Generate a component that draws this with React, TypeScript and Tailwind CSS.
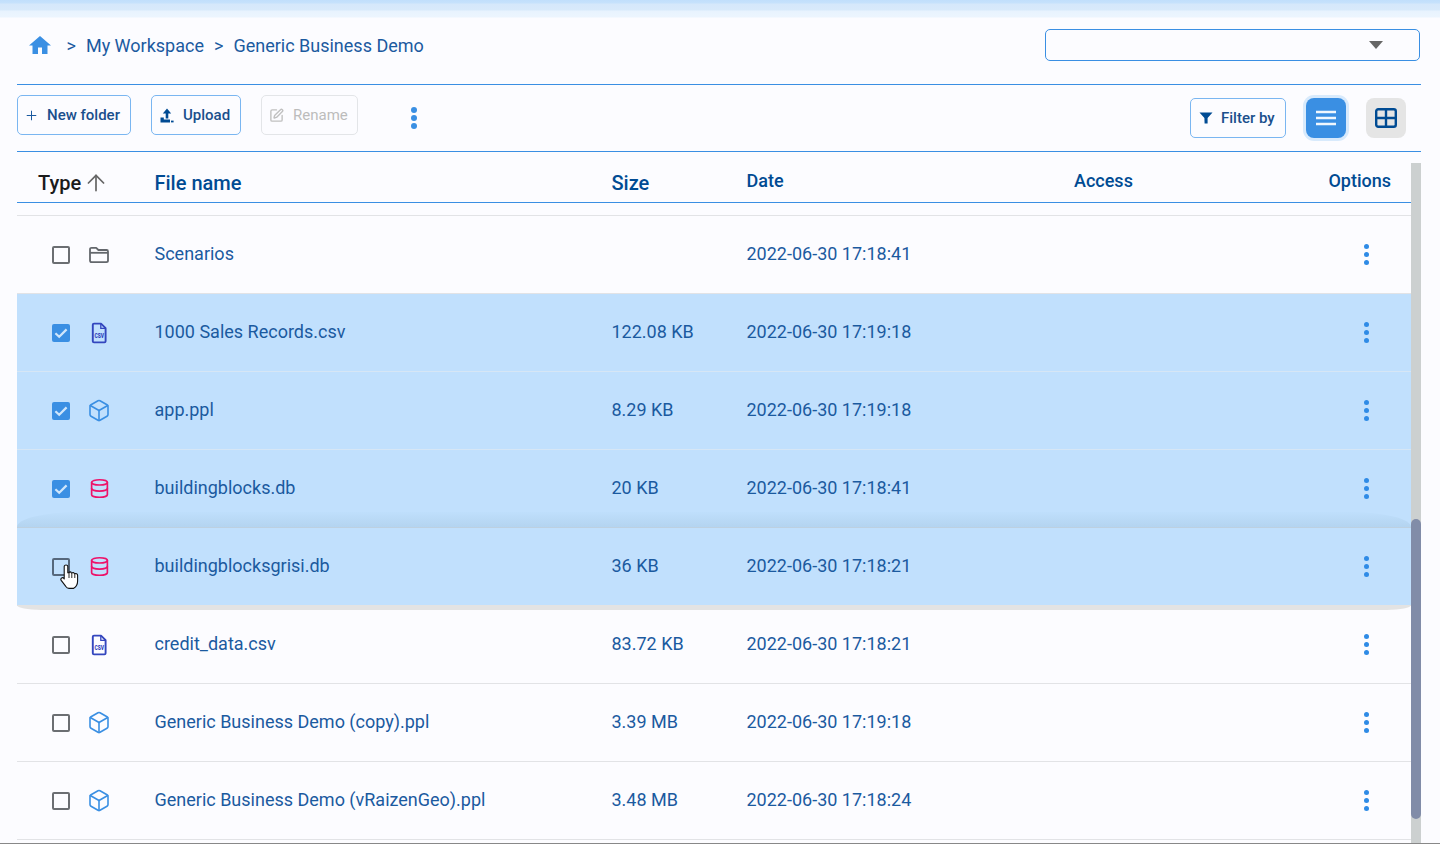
import React from "react";
import { ArrowUp, Box, Database, Plus, SquarePen } from "lucide-react";

type Kind = "folder" | "csv" | "ppl" | "db";
type Row = { name: string; size: string; date: string; kind: Kind; checked?: boolean; selected?: boolean; hover?: boolean };

const rows: Row[] = [
  { name: "Scenarios", size: "", date: "2022-06-30 17:18:41", kind: "folder" },
  { name: "1000 Sales Records.csv", size: "122.08 KB", date: "2022-06-30 17:19:18", kind: "csv", checked: true, selected: true },
  { name: "app.ppl", size: "8.29 KB", date: "2022-06-30 17:19:18", kind: "ppl", checked: true, selected: true },
  { name: "buildingblocks.db", size: "20 KB", date: "2022-06-30 17:18:41", kind: "db", checked: true, selected: true },
  { name: "buildingblocksgrisi.db", size: "36 KB", date: "2022-06-30 17:18:21", kind: "db", selected: true, hover: true },
  { name: "credit_data.csv", size: "83.72 KB", date: "2022-06-30 17:18:21", kind: "csv" },
  { name: "Generic Business Demo (copy).ppl", size: "3.39 MB", date: "2022-06-30 17:19:18", kind: "ppl" },
  { name: "Generic Business Demo (vRaizenGeo).ppl", size: "3.48 MB", date: "2022-06-30 17:18:24", kind: "ppl" },
];

function FileIcon({ kind }: { kind: Kind }) {
  if (kind === "folder")
    return (
      <svg width="22" height="22" viewBox="0 0 22 22" fill="none" stroke="#63676c" strokeWidth="1.8" strokeLinejoin="round">
        <path d="M2 7V5.5C2 4.4 2.7 3.8 3.6 3.8H8.2L10.4 6H18.6C19.5 6 20 6.7 20 7.5V16.6C20 17.6 19.4 18.2 18.4 18.2H3.6C2.6 18.2 2 17.6 2 16.6V7Z" />
        <path d="M2 8.8H20" />
      </svg>
    );
  if (kind === "csv")
    return (
      <svg width="22" height="22" viewBox="0 0 22 22" fill="none">
        <path d="M4.8 2.8C4.8 2 5.4 1.6 6 1.6H13L17.6 6.2V19.2C17.6 19.9 17 20.4 16.4 20.4H6C5.4 20.4 4.8 19.9 4.8 19.2V2.8Z" stroke="#3346be" strokeWidth="1.9" strokeLinejoin="round" />
        <path d="M12.8 2V6.4H17.2" stroke="#3346be" strokeWidth="1.3" />
        <text x="11.2" y="15.6" textAnchor="middle" fontSize="7" fontWeight="900" fill="#3346be" fontFamily="Roboto, sans-serif" textLength="9.6" lengthAdjust="spacingAndGlyphs">CSV</text>
      </svg>
    );
  if (kind === "ppl") return <Box size={25} strokeWidth={1.6} color="#3a8fe3" />;
  return <Database size={21} strokeWidth={1.9} color="#ee1168" />;
}

function Check({ checked, hover }: { checked?: boolean; hover?: boolean }) {
  if (checked)
    return (
      <div className="w-[18px] h-[18px] rounded-[2px] bg-[#3a8fe3] flex items-center justify-center">
        <svg width="14" height="14" viewBox="0 0 14 14" fill="none" stroke="#cfe6fb" strokeWidth="2.2"><path d="M1.4 7.2L5.2 10.8L12.6 3.4" /></svg>
      </div>
    );
  return <div className={`w-[18px] h-[18px] rounded-[2px] border-2 ${hover ? "border-[#56687c]" : "border-[#6b6e72]"}`} />;
}

function Dots({ big }: { big?: boolean }) {
  const dot = big ? "w-[6px] h-[6px] rounded-full bg-[#3a8fe3]" : "w-[5px] h-[5px] rounded-full bg-[#2f8be6]";
  return (
    <div className={`flex flex-col items-center ${big ? "gap-[2px]" : "gap-[3px]"}`}>
      <span className={dot} />
      <span className={dot} />
      <span className={dot} />
    </div>
  );
}

function Cursor() {
  return (
    <svg className="absolute left-[43px] top-[36px]" width="20" height="26" viewBox="0 0 20 26">
      <path d="M4.2 2.4C4.2 0.6 7.8 0.6 7.8 2.4V8.8L9 8.6C9.6 7.6 11 7.7 11.3 8.8L12 9C12.6 8.2 14 8.4 14.3 9.6L15 9.8C15.8 9.2 17.6 9.6 17.6 11.2V17C17.6 20.4 16 23 13.4 24.4H9C7.4 24.4 6.4 23.4 5.6 22.2L1.2 16.4C0 14.6 2.4 12.8 3.6 14.2L4.2 15V2.4Z" fill="#ffffff" stroke="#111111" strokeWidth="1.1" strokeLinejoin="round" />
      <path d="M9 8.8V14M11.8 9V14M14.8 9.8V14" stroke="#111111" strokeWidth="0.9" />
    </svg>
  );
}

function FileRow({ r }: { r: Row }) {
  return (
    <div className={`relative h-[78px] shrink-0 grid grid-cols-[137.5px_457px_135px_1fr_80px] items-center border-b text-[18px] text-[#1b5a9f] ${r.selected ? "bg-[#c1e0fd]" : ""} ${r.hover ? "border-b-[#c9dcec] z-10" : r.selected ? "border-b-[#d6e6f5]" : "border-b-[#e2e3e6]"}`}>
      {r.hover && (
        <>
          <div className="absolute left-0 right-0 bottom-full h-[16px] rounded-tl-[60px_15px] rounded-tr-[60px_15px] border-b border-b-[#bdd0e0] bg-gradient-to-b from-[#bfdffc] to-[#b4d4f0]" />
          <div className="absolute left-0 right-0 top-full h-[5px] rounded-bl-[24px_5px] rounded-br-[24px_5px] bg-[#e3e3e3]" />
          <Cursor />
        </>
      )}
      <div className="flex items-center pl-[35px]">
        <Check checked={r.checked} hover={r.hover} />
        <div className="ml-[17px] w-[24px] flex items-center justify-center"><FileIcon kind={r.kind} /></div>
      </div>
      <div className="pb-[2px]">{r.name}</div>
      <div className="pb-[2px]">{r.size}</div>
      <div className="pb-[2px]">{r.date}</div>
      <div className="pr-[10px]"><Dots /></div>
    </div>
  );
}

export default function App() {
  return (
    <div className="h-[844px] flex flex-col overflow-hidden bg-[#fcfcff] font-['Roboto',sans-serif]">
      <div className="h-[18px] shrink-0 bg-[linear-gradient(to_bottom,#c1dffc_0px,#c6e2fc_3px,#d5e8fb_4px,#d8eafb_10px,#e8f3fe_11px,#ecf5fe_17px,#fcfcff_18px)]" />

      <div className="ml-[17px] w-[1404px] h-[67px] shrink-0 flex items-start justify-between border-b border-[#3a8fe3]">
        <div className="flex items-center h-[54px] pl-[11px] text-[18px] text-[#1b5a9f]">
          <svg width="24" height="24" viewBox="0 0 24 24" fill="#3a8fe3"><path d="M10 21v-6.5h4V21h5.5v-8.5H23L12 3 1 12.5h3.5V21z" /></svg>
          <span className="ml-[14.5px]">&gt;</span>
          <span className="ml-[10px]">My Workspace</span>
          <span className="ml-[10px]">&gt;</span>
          <span className="ml-[10px]">Generic Business Demo</span>
        </div>
        <div className="mt-[11px] mr-[1px] w-[375px] h-[32px] border border-[#3a8fe3] rounded-[5px] flex items-center justify-end pr-[36px]">
          <svg width="14" height="8" viewBox="0 0 14 8" fill="#666666"><path d="M0 0H14L7 8Z" /></svg>
        </div>
      </div>

      <div className="ml-[17px] w-[1404px] h-[67px] shrink-0 flex items-start justify-between border-b border-[#3a8fe3]">
        <div className="flex items-center mt-[10px] text-[15px] font-medium whitespace-nowrap">
          <button className="h-[40px] w-[114px] border border-[#7ab6f1] rounded-[5px] flex items-center pl-[6px] text-[#1a4f8c]">
            <Plus size={15} strokeWidth={1.6} color="#1b5a9f" />
            <span className="ml-[8px]">New folder</span>
          </button>
          <button className="ml-[20px] h-[40px] w-[90px] border border-[#7ab6f1] rounded-[5px] flex items-center pl-[8px] text-[#1a4f8c]">
            <svg width="14" height="15" viewBox="0 0 14 15" fill="#004b93"><path d="M7 0.5L11.2 5.4H8.3V10.4H5.7V5.4H2.8L7 0.5Z" /><path d="M0.5 9.4H3.8V11.6H10V14.4H0.5V9.4Z" /><path d="M11 12.6H13.6V14.4H11Z" /></svg>
            <span className="ml-[9px]">Upload</span>
          </button>
          <button className="ml-[20px] h-[40px] w-[97px] border border-[#e3e5e8] rounded-[5px] flex items-center pl-[7px] text-[#bcbcbc] font-normal">
            <SquarePen size={15} strokeWidth={2.2} color="#c0c0c0" />
            <span className="ml-[9px]">Rename</span>
          </button>
          <div className="ml-[52.5px] mt-[6px]"><Dots big /></div>
        </div>
        <div className="flex items-center mt-[13px] mr-[15px] whitespace-nowrap">
          <button className="h-[40px] w-[96px] border border-[#7ab6f1] rounded-[5px] flex items-center pl-[8px] text-[15px] font-medium text-[#1a4f8c]">
            <svg width="14" height="12" viewBox="0 0 14 12" fill="#004b93"><path d="M0.5 0.5H13.5L8.6 6V11.5H5.6L5.4 6Z" /></svg>
            <span className="ml-[8px]">Filter by</span>
          </button>
          <button className="ml-[20px] w-[40px] h-[40px] rounded-[8px] bg-[#3a8fe3] shadow-[0_0_0_3px_#d8eafc] flex items-center justify-center">
            <svg width="20" height="18" viewBox="0 0 20 18" stroke="#f0f7fe" strokeWidth="2.4"><path d="M0 3H20M0 9H20M0 15H20" /></svg>
          </button>
          <button className="ml-[20px] w-[40px] h-[40px] rounded-[8px] bg-[#e5e5e5] flex items-center justify-center">
            <svg width="22" height="20" viewBox="0 0 22 20" fill="none" stroke="#004b93" strokeWidth="2.4"><rect x="1.2" y="1.2" width="19.6" height="17.6" rx="2" /><path d="M11 1V19M1 10H21" /></svg>
          </button>
        </div>
      </div>

      <div className="ml-[17px] w-[1404px] flex-1 min-h-0 flex">
        <div className="w-[1394px] flex flex-col">
          <div className="h-[51px] shrink-0 border-b border-[#3a8fe3] grid grid-cols-[137.5px_457px_135px_327.5px_1fr] items-center text-[#004b93] font-medium">
            <div className="flex items-center pl-[21px] pt-[11px] text-[20px] text-[#1b1b1b]">
              Type
              <ArrowUp size={26} strokeWidth={1.6} color="#666666" className="ml-[2px] shrink-0" />
            </div>
            <div className="pt-[11px] text-[20px]">File name</div>
            <div className="pt-[11px] text-[20px]">Size</div>
            <div className="pt-[7px] text-[18px]">Date</div>
            <div className="pt-[7px] text-[18px] flex justify-between pr-[20px]">
              <span>Access</span>
              <span>Options</span>
            </div>
          </div>
          <div className="h-[13px] shrink-0 border-b border-[#e2e3e6]" />
          {rows.map((r) => (
            <FileRow key={r.name} r={r} />
          ))}
        </div>
        <div className="w-[10px] flex flex-col pt-[11px]">
          <div className="flex-1 bg-[#ccd0d0]">
            <div className="mt-[356px] h-[300px] rounded-[5px] bg-[#818ca8]" />
          </div>
        </div>
      </div>
      <div className="h-[1px] shrink-0 bg-[#888888]" />
    </div>
  );
}
